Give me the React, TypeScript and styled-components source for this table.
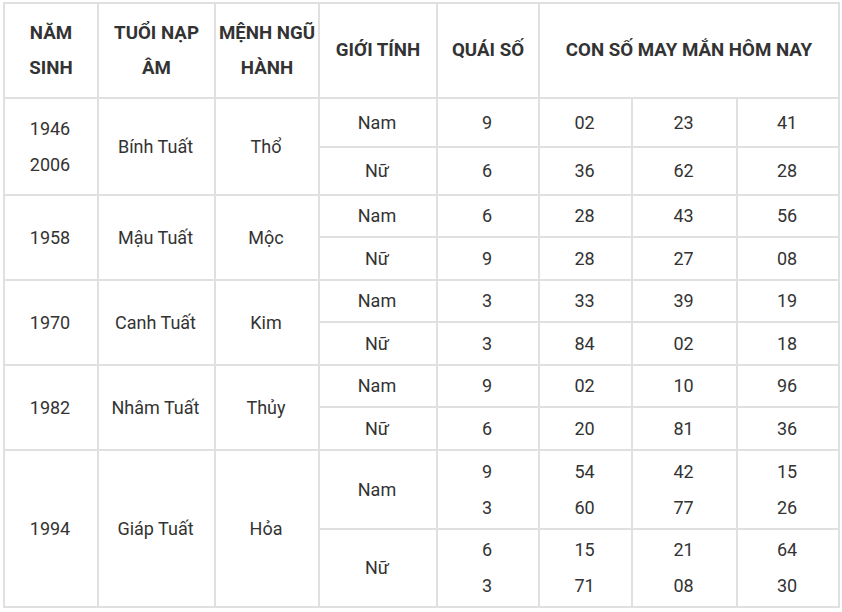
import React from 'react'
import styled, { createGlobalStyle } from 'styled-components'

const GlobalStyle = createGlobalStyle`
  body {
    margin: 0;
    background: #fff;
    font-family: Roboto, 'Noto Sans', sans-serif;
    color: #333;
  }
`

type Gender = {
  label: string
  height: number
  quai: string[]
  numbers: string[][]
}

type Year = {
  years: string[]
  tuoi: string
  menh: string
  rows: Gender[]
}

const data: Year[] = [
  {
    years: ['1946', '2006'],
    tuoi: 'Bính Tuất',
    menh: 'Thổ',
    rows: [
      { label: 'Nam', height: 49, quai: ['9'], numbers: [['02'], ['23'], ['41']] },
      { label: 'Nữ', height: 48, quai: ['6'], numbers: [['36'], ['62'], ['28']] },
    ],
  },
  {
    years: ['1958'],
    tuoi: 'Mậu Tuất',
    menh: 'Mộc',
    rows: [
      { label: 'Nam', height: 42, quai: ['6'], numbers: [['28'], ['43'], ['56']] },
      { label: 'Nữ', height: 43, quai: ['9'], numbers: [['28'], ['27'], ['08']] },
    ],
  },
  {
    years: ['1970'],
    tuoi: 'Canh Tuất',
    menh: 'Kim',
    rows: [
      { label: 'Nam', height: 42, quai: ['3'], numbers: [['33'], ['39'], ['19']] },
      { label: 'Nữ', height: 43, quai: ['3'], numbers: [['84'], ['02'], ['18']] },
    ],
  },
  {
    years: ['1982'],
    tuoi: 'Nhâm Tuất',
    menh: 'Thủy',
    rows: [
      { label: 'Nam', height: 42, quai: ['9'], numbers: [['02'], ['10'], ['96']] },
      { label: 'Nữ', height: 43, quai: ['6'], numbers: [['20'], ['81'], ['36']] },
    ],
  },
  {
    years: ['1994'],
    tuoi: 'Giáp Tuất',
    menh: 'Hỏa',
    rows: [
      { label: 'Nam', height: 79, quai: ['9', '3'], numbers: [['54', '60'], ['42', '77'], ['15', '26']] },
      { label: 'Nữ', height: 78, quai: ['6', '3'], numbers: [['15', '71'], ['21', '08'], ['64', '30']] },
    ],
  },
]

const colWidths = [94, 117, 104, 118, 102, 93, 105, 102]

const Page = styled.div`
  padding: 2px 3px;
`

const Table = styled.table`
  border-collapse: collapse;
  table-layout: fixed;
  width: 835px;
`

const Row = styled.tr<{ $height: number }>`
  height: ${({ $height }) => $height}px;
`

const HeadCell = styled.th`
  border: 2px solid #e0e0e0;
  padding: 0 1px;
  font-size: 18.7px;
  font-weight: 700;
  line-height: 35px;
  color: #333;
  text-align: center;
  vertical-align: middle;
`

const Cell = styled.td`
  border: 2px solid #e0e0e0;
  padding: 0 4px 0 2px;
  font-size: 18px;
  font-weight: 400;
  line-height: 36px;
  color: #333;
  text-align: center;
  vertical-align: middle;
`

const Lines = ({ items }: { items: string[] }) => (
  <>
    {items.map((t, i) => (
      <React.Fragment key={i}>
        {i > 0 && <br />}
        {t}
      </React.Fragment>
    ))}
  </>
)

export default function App() {
  return (
    <Page>
      <GlobalStyle />
      <Table>
        <colgroup>
          {colWidths.map((w, i) => (
            <col key={i} style={{ width: w }} />
          ))}
        </colgroup>
        <thead>
          <Row $height={95}>
            <HeadCell>NĂM<br />SINH</HeadCell>
            <HeadCell>TUỔI NẠP<br />ÂM</HeadCell>
            <HeadCell>MỆNH NGŨ<br />HÀNH</HeadCell>
            <HeadCell>GIỚI TÍNH</HeadCell>
            <HeadCell>QUÁI SỐ</HeadCell>
            <HeadCell colSpan={3}>CON SỐ MAY MẮN HÔM NAY</HeadCell>
          </Row>
        </thead>
        <tbody>
          {data.map((y) =>
            y.rows.map((g, gi) => (
              <Row key={y.tuoi + g.label} $height={g.height}>
                {gi === 0 && (
                  <>
                    <Cell rowSpan={y.rows.length}>
                      <Lines items={y.years} />
                    </Cell>
                    <Cell rowSpan={y.rows.length}>{y.tuoi}</Cell>
                    <Cell rowSpan={y.rows.length}>{y.menh}</Cell>
                  </>
                )}
                <Cell>{g.label}</Cell>
                <Cell>
                  <Lines items={g.quai} />
                </Cell>
                {g.numbers.map((n, ni) => (
                  <Cell key={ni}>
                    <Lines items={n} />
                  </Cell>
                ))}
              </Row>
            ))
          )}
        </tbody>
      </Table>
    </Page>
  )
}
